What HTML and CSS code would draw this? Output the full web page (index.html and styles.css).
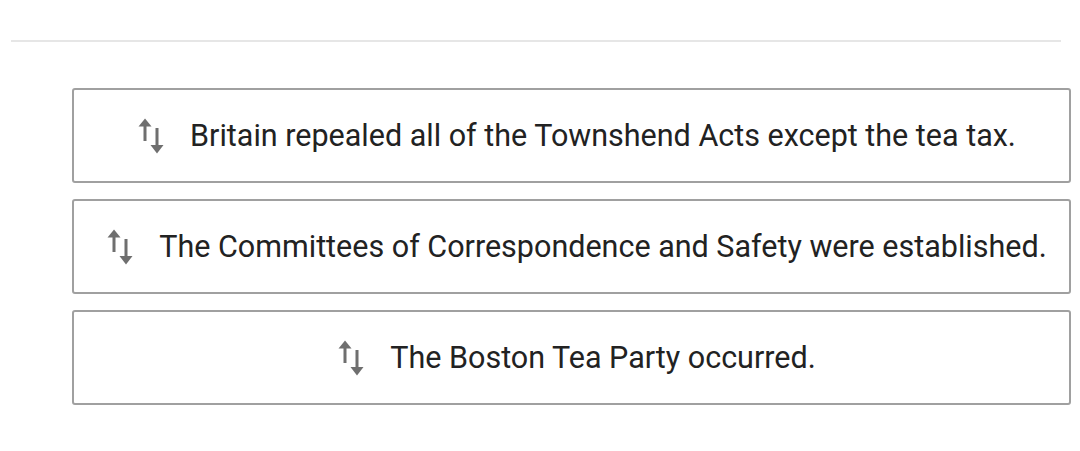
FILE: index.html
```html
<!DOCTYPE html>
<html>
<head>
<meta charset="utf-8">
<link rel="stylesheet" href="styles.css">
</head>
<body>
<div class="page">
  <div class="rule"></div>
  <div class="list">
    <div class="card">
      <svg class="icon" viewBox="0 0 28 36" width="28" height="36"><rect x="6.5" y="6" width="3" height="17"/><polygon points="1.5,8.5 8,0.5 14.5,8.5"/><rect x="18.5" y="10" width="3" height="18"/><polygon points="13.5,27 20,35.5 26.5,27"/></svg>
      <span class="text">Britain repealed all of the Townshend Acts except the tea tax.</span>
    </div>
    <div class="card">
      <svg class="icon" viewBox="0 0 28 36" width="28" height="36"><rect x="6.5" y="6" width="3" height="17"/><polygon points="1.5,8.5 8,0.5 14.5,8.5"/><rect x="18.5" y="10" width="3" height="18"/><polygon points="13.5,27 20,35.5 26.5,27"/></svg>
      <span class="text">The Committees of Correspondence and Safety were established.</span>
    </div>
    <div class="card">
      <svg class="icon" viewBox="0 0 28 36" width="28" height="36"><rect x="6.5" y="6" width="3" height="17"/><polygon points="1.5,8.5 8,0.5 14.5,8.5"/><rect x="18.5" y="10" width="3" height="18"/><polygon points="13.5,27 20,35.5 26.5,27"/></svg>
      <span class="text">The Boston Tea Party occurred.</span>
    </div>
  </div>
</div>
</body>
</html>
```
FILE: styles.css
```css
html, body {
  margin: 0;
  padding: 0;
  background: #ffffff;
}
.page {
  padding-top: 40px;
  font-family: Roboto, "Liberation Sans", sans-serif;
}
.rule {
  margin-left: 11px;
  width: 1050px;
  height: 2px;
  background: #e6e6e6;
}
.list {
  margin-top: 46px;
  margin-left: 72px;
  width: 999px;
  display: flex;
  flex-direction: column;
  gap: 16px;
}
.card {
  box-sizing: border-box;
  height: 95px;
  border: 2px solid #a0a0a0;
  border-radius: 3px;
  display: flex;
  align-items: center;
  justify-content: center;
  padding-left: 10px;
  gap: 25px;
}
.icon {
  fill: #6f6f6f;
  flex: none;
  margin-top: 1px;
}
.text {
  font-size: 30.5px;
  color: #222222;
  white-space: nowrap;
}
```
